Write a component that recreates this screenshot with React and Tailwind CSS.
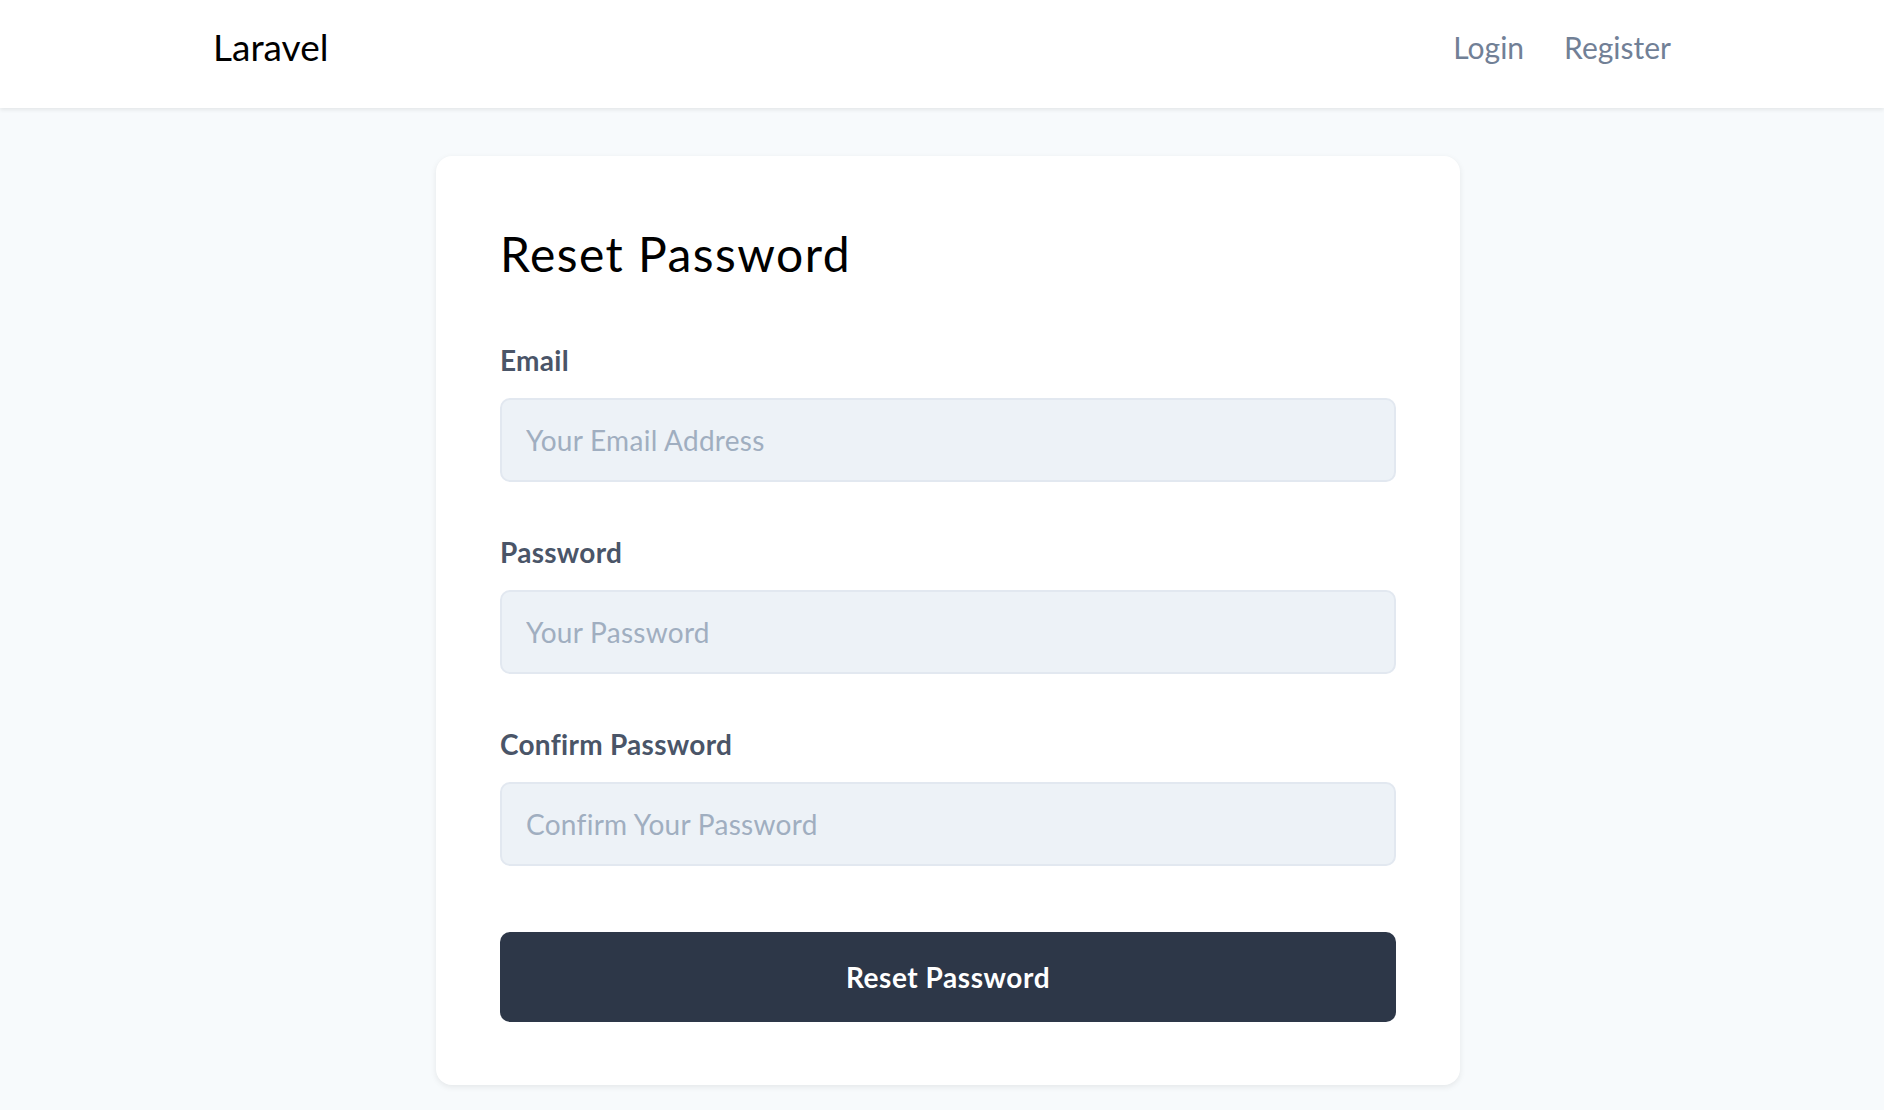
const FONT = { fontFamily: "Lato, 'Open Sans', sans-serif" };

function Field({ label, type, placeholder, className = "" }) {
  return (
    <div className={className}>
      <label className="block text-[28px] leading-[28px] font-bold tracking-[0.01em] text-[#4a5568]">
        {label}
      </label>
      <input
        type={type}
        placeholder={placeholder}
        className="mt-6 block h-[84px] w-full rounded-[10px] border-2 border-[#e2e8f0] bg-[#edf2f7] px-6 text-[28px] tracking-[0.01em] text-[#2d3748] placeholder:text-[#a0aec0] outline-none"
      />
    </div>
  );
}

export default function App() {
  return (
    <div className="min-h-screen bg-[#f7fafc]" style={FONT}>
      {/* top bar */}
      <header className="bg-white shadow-[0_2px_4px_rgba(0,0,0,0.08)]">
        <div className="mx-auto flex h-[108px] max-w-[1458px] items-center justify-between pb-[15px]">
          <a href="#" className="text-[37px] leading-none text-black">
            Laravel
          </a>
          <nav className="flex items-center gap-[40px] text-[30px] leading-none text-[#718096]">
            <a href="#">Login</a>
            <a href="#">Register</a>
          </nav>
        </div>
      </header>

      <main className="pt-12">
        <div className="ml-[436px] w-[1024px] rounded-2xl bg-white px-16 pt-[74px] pb-[63px] shadow-[0_2px_6px_rgba(0,0,0,0.08)]">
          <h1 className="text-[48px] leading-[48px] tracking-[0.03em] text-black">
            Reset Password
          </h1>

          <form onSubmit={(e) => e.preventDefault()}>
            <Field
              className="mt-[68px]"
              label="Email"
              type="email"
              placeholder="Your Email Address"
            />
            <Field
              className="mt-14"
              label="Password"
              type="password"
              placeholder="Your Password"
            />
            <Field
              className="mt-14"
              label="Confirm Password"
              type="password"
              placeholder="Confirm Your Password"
            />

            <button
              type="submit"
              className="mt-[66px] flex h-[90px] w-full items-center justify-center rounded-[10px] bg-[#2d3748] text-[28px] font-bold tracking-[0.02em] text-white"
            >
              Reset Password
            </button>
          </form>
        </div>
      </main>
    </div>
  );
}
